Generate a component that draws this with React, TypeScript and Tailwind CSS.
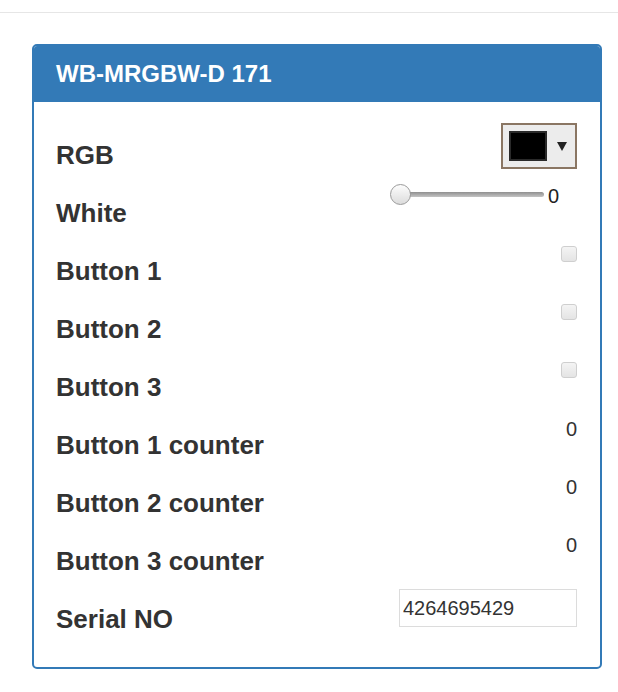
import type { ReactNode } from 'react'

const font = { fontFamily: '"Liberation Sans", Arial, Helvetica, sans-serif' }

/* --------------------------------------------------------------- controls */
function ColorPicker() {
  return (
    <div className="mt-[3px] flex h-[46px] w-[76px] items-center border-2 border-[#8a7663] bg-[#ececec] pl-[6px]">
      <div className="h-[30px] w-[38px] border-2 border-[#2a2a2a] bg-black" />
      <svg width="10" height="9" viewBox="0 0 10 9" className="ml-[10px]">
        <path d="M0 0H10L5 9Z" fill="#222" />
      </svg>
    </div>
  )
}

function Slider({ value }: { value: number }) {
  return (
    <div className="mr-[18px] mt-[4px] flex items-center">
      <div className="relative flex h-[21px] w-[154px] items-center">
        <div className="ml-[10px] h-[5px] flex-1 rounded-full bg-gradient-to-b from-[#8f8f8f] to-[#c4c4c4]" />
        <div className="absolute left-0 top-0 h-[21px] w-[21px] rounded-full border border-[#9a9a9a] bg-gradient-to-b from-[#fdfdfd] to-[#dcdcdc]" />
      </div>
      <span className="ml-[4px] mt-[4px] text-[20px] leading-none text-[#222]">{value}</span>
    </div>
  )
}

function Check() {
  return <div className="mt-[10px] h-[16px] w-[16px] rounded-[3px] border border-[#cfcfcf] bg-gradient-to-b from-[#f4f4f4] to-[#e4e4e4]" />
}

function Counter({ value }: { value: number }) {
  return <span className="mt-[9px] text-[20px] leading-[20px] text-[#333]">{value}</span>
}

function SerialInput({ value }: { value: string }) {
  return (
    <input
      readOnly
      value={value}
      className="mt-[5px] h-[38px] w-[178px] border border-[#dcdcdc] bg-white pl-[3px] text-[20px] text-[#333] outline-none"
      style={font}
    />
  )
}

/* -------------------------------------------------------------------- rows */
function Row({ label, children }: { label: string; children: ReactNode }) {
  return (
    <div className="flex h-[58px] items-start justify-between">
      <span className="pt-[20px] text-[26px] font-bold leading-[30px] text-[#333]">{label}</span>
      {children}
    </div>
  )
}

export default function App() {
  return (
    <div className="min-h-[692px] bg-white" style={font}>
      <div className="h-[13px] border-b border-[#e6e6e6]" />
      <div className="px-[32px] pb-[23px] pt-[31px]">
        <div className="w-[570px] overflow-hidden rounded-[5px] border-2 border-[#337ab7]">
          <div className="flex h-[56px] items-center bg-[#337ab7] pl-[22px]">
            <h1 className="text-[24px] font-bold leading-none text-white">WB-MRGBW-D 171</h1>
          </div>
          <div className="pb-[25px] pl-[22px] pr-[23px] pt-[18px]">
            <Row label="RGB"><ColorPicker /></Row>
            <Row label="White"><Slider value={0} /></Row>
            <Row label="Button 1"><Check /></Row>
            <Row label="Button 2"><Check /></Row>
            <Row label="Button 3"><Check /></Row>
            <Row label="Button 1 counter"><Counter value={0} /></Row>
            <Row label="Button 2 counter"><Counter value={0} /></Row>
            <Row label="Button 3 counter"><Counter value={0} /></Row>
            <Row label="Serial NO"><SerialInput value="4264695429" /></Row>
          </div>
        </div>
      </div>
    </div>
  )
}
